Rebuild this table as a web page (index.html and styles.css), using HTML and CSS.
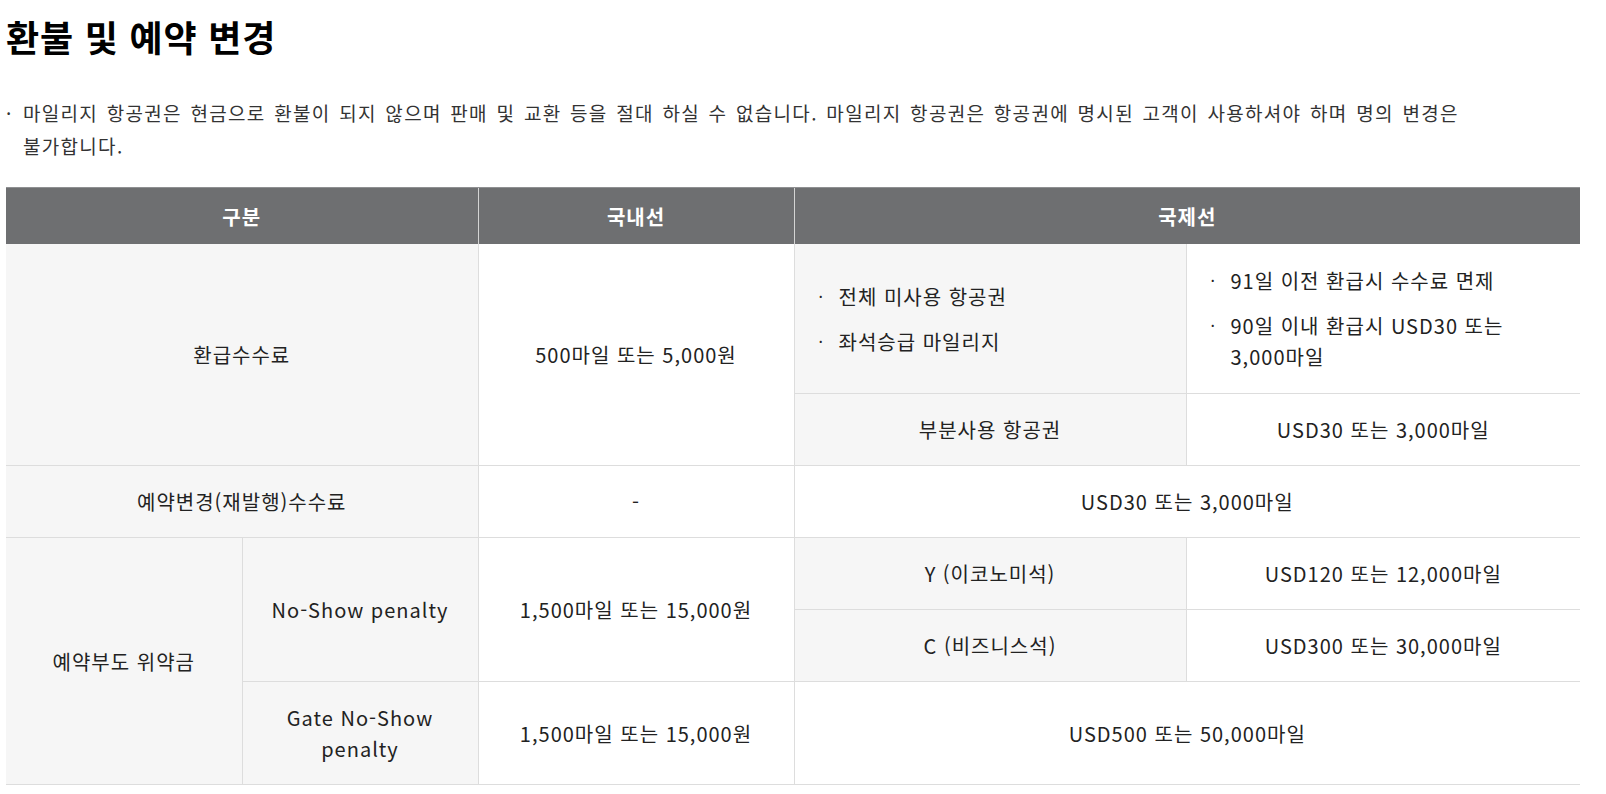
FILE: index.html
```html
<!DOCTYPE html>
<html lang="ko">
<head>
<meta charset="utf-8">
<title>환불 및 예약 변경</title>
<link rel="stylesheet" href="styles.css">
</head>
<body>
<div class="page">
  <h1 class="title">환불 및 예약 변경</h1>
  <p class="notice">마일리지 항공권은 현금으로 환불이 되지 않으며 판매 및 교환 등을 절대 하실 수 없습니다. 마일리지 항공권은 항공권에 명시된 고객이 사용하셔야 하며 명의 변경은 불가합니다.</p>
  <table class="fee-table">
    <colgroup>
      <col class="c1"><col class="c2"><col class="c3"><col class="c4"><col class="c5">
    </colgroup>
    <thead>
      <tr><th colspan="2">구분</th><th>국내선</th><th colspan="2">국제선</th></tr>
    </thead>
    <tbody>
      <tr class="refund">
        <td colspan="2" rowspan="2" class="gray first">환급수수료</td>
        <td rowspan="2">500마일 또는 5,000원</td>
        <td class="gray left">
          <ul class="dots">
            <li>전체 미사용 항공권</li>
            <li>좌석승급 마일리지</li>
          </ul>
        </td>
        <td class="left">
          <ul class="dots">
            <li>91일 이전 환급시 수수료 면제</li>
            <li>90일 이내 환급시 USD30 또는 3,000마일</li>
          </ul>
        </td>
      </tr>
      <tr class="row72">
        <td class="gray">부분사용 항공권</td>
        <td>USD30 또는 3,000마일</td>
      </tr>
      <tr class="row72">
        <td colspan="2" class="gray first">예약변경(재발행)수수료</td>
        <td>-</td>
        <td colspan="2">USD30 또는 3,000마일</td>
      </tr>
      <tr class="row72">
        <td rowspan="3" class="gray first">예약부도 위약금</td>
        <td rowspan="2" class="gray">No-Show penalty</td>
        <td rowspan="2">1,500마일 또는 15,000원</td>
        <td class="gray">Y (이코노미석)</td>
        <td>USD120 또는 12,000마일</td>
      </tr>
      <tr class="row72">
        <td class="gray">C (비즈니스석)</td>
        <td>USD300 또는 30,000마일</td>
      </tr>
      <tr>
        <td class="gray gate">Gate No-Show penalty</td>
        <td>1,500마일 또는 15,000원</td>
        <td colspan="2">USD500 또는 50,000마일</td>
      </tr>
    </tbody>
  </table>
</div>
</body>
</html>
```

FILE: styles.css
```css
html, body {
  margin: 0;
  padding: 0;
  background: #fff;
}

body {
  font-family: "Noto Sans CJK KR", "Noto Sans", sans-serif;
  color: #222;
}

.page {
  padding: 14px 0 0 6px;
  width: 1574px;
}

.title {
  margin: 0;
  font-size: 36px;
  line-height: 44px;
  font-weight: 700;
  color: #000;
  letter-spacing: 0.8px;
  word-spacing: 0;
}

.notice {
  width: 1460px;
  margin: 38px 0 0 0;
  padding-left: 17px;
  text-indent: -17px;
  font-size: 19px;
  line-height: 33px;
  letter-spacing: 1.3px;
  word-spacing: 2px;
  color: #333;
}

.notice::before {
  content: "·";
  display: inline-block;
  width: 17px;
  text-indent: 0;
  letter-spacing: 0;
}

.fee-table {
  margin-top: 25px;
  width: 1574px;
  border-collapse: collapse;
  table-layout: fixed;
  font-size: 20px;
  line-height: 31px;
  letter-spacing: 1px;
  color: #222;
}

.c1 { width: 236px; }
.c2 { width: 236px; }
.c3 { width: 316px; }
.c4 { width: 392px; }
.c5 { width: 394px; }

.fee-table th {
  height: 56px;
  padding: 0;
  background: #6e6f71;
  color: #fff;
  font-weight: 700;
  border-top: 1px solid #8f9092;
  border-left: 1px solid #d4d4d4;
}

.fee-table th:first-child {
  border-left: none;
}

.fee-table td {
  padding: 20px 20px;
  text-align: center;
  vertical-align: middle;
  border-bottom: 1px solid #dddddd;
  border-left: 1px solid #dddddd;
  background: #fff;
}

.fee-table td.first {
  border-left: none;
}

.fee-table td.gray {
  background: #f6f6f6;
}

.fee-table td.left {
  text-align: left;
  padding: 21px 24px;
}

.row72 td {
  height: 31px;
}

.dots {
  list-style: none;
  margin: 0;
  padding: 0;
}

.dots li {
  display: flex;
}

.dots li + li {
  margin-top: 14px;
}

.dots li::before {
  content: "·";
  flex: 0 0 20px;
  font-size: 16px;
  letter-spacing: 0;
}
```
